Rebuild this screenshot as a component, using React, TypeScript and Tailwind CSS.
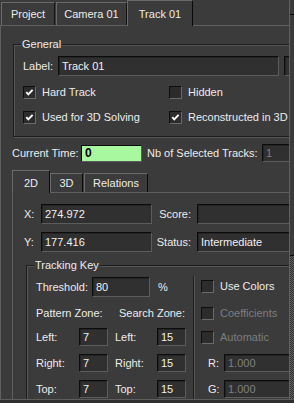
import React from "react";

const BG = "bg-[#3b3b3b]";

function Field({ cls, text, disabled }: { cls: string; text?: string; disabled?: boolean }) {
  return (
    <div
      className={`${cls} shrink-0 flex items-center pl-[3px] bg-[#303030] border border-t-[#0c0c0c] border-l-[#0c0c0c] border-b-[#5c5c5c] border-r-[#5c5c5c] shadow-[inset_1px_1px_0_#242424] overflow-hidden whitespace-nowrap ${disabled ? "text-[#7f7f7f]" : "text-[#f0f0f0]"}`}
    >
      {text}
    </div>
  );
}

function Check({ checked, disabled, label, cls }: { checked?: boolean; disabled?: boolean; label: string; cls?: string }) {
  return (
    <div className={`flex items-center h-[13px] ${cls ?? ""}`}>
      <span className="w-[13px] h-[13px] shrink-0 flex items-center justify-center bg-[#2c2c2c] border border-t-[#0e0e0e] border-l-[#0e0e0e] border-b-[#6a6a6a] border-r-[#6a6a6a]">
        {checked && (
          <svg width="11" height="11" viewBox="0 0 11 11">
            <path d="M2.3 5.2 L4.3 7.4 L8.6 2.8" stroke="#ffffff" strokeWidth="1.9" fill="none" />
          </svg>
        )}
      </span>
      <span className={`ml-[6px] whitespace-nowrap ${disabled ? "text-[#7d7d7d]" : ""}`}>{label}</span>
    </div>
  );
}

export default function App() {
  return (
    <div
      className={`w-[294px] h-[403px] relative overflow-hidden bg-[#2f2f2f] text-[11px] leading-[13px] text-[#ececec]`}
      style={{ fontFamily: '"Liberation Sans", Arial, sans-serif' }}
    >
      {/* main tabs */}
      <div className={`flex items-end h-[25px] pl-[1px] ${BG}`}>
        <div className="w-[54px] h-[23px] flex items-center justify-center border-t border-l border-r border-t-[#6a6a6a] border-l-[#6a6a6a] border-r-[#151515]">
          Project
        </div>
        <div className="ml-[1px] w-[71px] h-[23px] flex items-center justify-center border-t border-l border-r border-t-[#6a6a6a] border-l-[#6a6a6a] border-r-[#151515]">
          Camera 01
        </div>
        <div className={`relative z-10 w-[66px] h-[26px] -mb-[1px] flex items-start justify-center pt-[7px] border-t border-l border-r border-t-[#6a6a6a] border-l-[#6a6a6a] border-r-[#0a0a0a] ${BG}`}>
          Track 01
        </div>
      </div>

      {/* main panel */}
      <div className={`h-[375px] overflow-hidden border-t border-l border-b border-t-[#606060] border-l-[#606060] border-b-[#5e5e5e] ${BG}`}>
        {/* General group */}
        <div className="relative mt-[18px] ml-[12px] w-[300px] h-[93px] border border-[#1e1e1e] shadow-[inset_1px_1px_0_#555555,1px_1px_0_#555555] pt-[11px] pl-[9px]">
          <span className={`absolute -top-[7px] left-[7px] px-[1px] ${BG}`}>General</span>
          <div className="flex items-center h-[20px]">
            <span className="w-[35px] shrink-0">Label:</span>
            <Field cls="w-[221px] h-[20px]" text="Track 01" />
            <Field cls="ml-[5px] w-[40px] h-[20px]" />
          </div>
          <div className="flex mt-[10px]">
            <Check checked label="Hard Track" cls="w-[146px]" />
            <Check label="Hidden" />
          </div>
          <div className="flex mt-[12px]">
            <Check checked label="Used for 3D Solving" cls="w-[146px]" />
            <Check checked label="Reconstructed in 3D" />
          </div>
        </div>

        {/* current time */}
        <div className="flex items-center h-[18px] mt-[7px] ml-[11px]">
          <span className="w-[69px] shrink-0">Current Time:</span>
          <div className="w-[61px] h-[17px] shrink-0 flex items-center pl-[3px] bg-[#a8f8a0] border border-t-[#0c0c0c] border-l-[#0c0c0c] border-b-[#5c5c5c] border-r-[#5c5c5c] text-black font-bold text-[12px]">
            0
          </div>
          <span className="ml-[5px] w-[115px] shrink-0 whitespace-nowrap">Nb of Selected Tracks:</span>
          <Field cls="w-[40px] h-[18px]" text="1" disabled />
        </div>

        {/* sub tabs */}
        <div className="flex items-end h-[22px] mt-[8px] ml-[11px]">
          <div className={`relative z-10 w-[38px] h-[23px] -mb-[1px] flex items-start justify-center pt-[6px] border-t border-l border-r border-t-[#6a6a6a] border-l-[#6a6a6a] border-r-[#0a0a0a] ${BG}`}>
            2D
          </div>
          <div className="w-[33px] h-[19px] flex items-center justify-center border-t border-l border-r border-t-[#6a6a6a] border-l-[#6a6a6a] border-r-[#0a0a0a]">
            3D
          </div>
          <div className="ml-[1px] w-[64px] h-[19px] flex items-center justify-center border-t border-l border-r border-t-[#6a6a6a] border-l-[#6a6a6a] border-r-[#0a0a0a]">
            Relations
          </div>
        </div>

        {/* sub panel */}
        <div className="ml-[11px] w-[300px] h-[220px] border-t border-l border-t-[#606060] border-l-[#606060] pl-[11px]">
          <div className="flex items-center h-[20px] mt-[11px]">
            <span className="w-[17px] shrink-0">X:</span>
            <Field cls="w-[111px] h-[20px]" text="274.972" />
            <span className="w-[45px] shrink-0 text-right pr-[6px]">Score:</span>
            <Field cls="w-[100px] h-[20px]" />
          </div>
          <div className="flex items-center h-[20px] mt-[8px]">
            <span className="w-[17px] shrink-0">Y:</span>
            <Field cls="w-[111px] h-[20px]" text="177.416" />
            <span className="w-[45px] shrink-0 text-right pr-[6px]">Status:</span>
            <Field cls="w-[100px] h-[20px]" text="Intermediate" />
          </div>

          {/* Tracking Key */}
          <div className="relative mt-[13px] ml-[2px] w-[300px] h-[200px] border border-[#1e1e1e] shadow-[inset_1px_1px_0_#555555] flex">
            <span className={`absolute -top-[7px] left-[7px] px-[1px] ${BG}`}>Tracking Key</span>
            <div className="w-[166px] shrink-0 pt-[11px] pl-[9px]">
              <div className="flex items-center h-[20px]">
                <span className="w-[56px] shrink-0">Threshold:</span>
                <Field cls="w-[58px] h-[20px]" text="80" />
                <span className="ml-[8px]">%</span>
              </div>
              <div className="flex items-center h-[14px] mt-[9px]">
                <span className="w-[83px] shrink-0">Pattern Zone:</span>
                <span>Search Zone:</span>
              </div>
              {[
                ["Left:", "7", "15"],
                ["Right:", "7", "15"],
                ["Top:", "7", "15"],
              ].map(([l, a, b], i) => (
                <div key={l} className={`flex items-center h-[18px] ${i === 0 ? "mt-[8px]" : "mt-[8px]"}`}>
                  <span className="w-[43px] shrink-0">{l}</span>
                  <Field cls="w-[29px] h-[18px]" text={a} />
                  <span className="ml-[7px] w-[42px] shrink-0">{l}</span>
                  <Field cls="w-[29px] h-[18px]" text={b} />
                </div>
              ))}
            </div>
            <div className="mt-[10px] h-[200px] border-l border-l-[#1e1e1e] shadow-[inset_1px_0_0_#555555] pt-[4px] pl-[7px] flex-1">
              <Check label="Use Colors" />
              <Check label="Coefficients" disabled cls="mt-[14px]" />
              <Check label="Automatic" disabled cls="mt-[11px]" />
              <div className="flex items-center h-[18px] mt-[10px] ml-[7px]">
                <span className="w-[16px] shrink-0">R:</span>
                <Field cls="w-[70px] h-[18px]" text="1.000" disabled />
              </div>
              <div className="flex items-center h-[18px] mt-[8px] ml-[7px]">
                <span className="w-[16px] shrink-0">G:</span>
                <Field cls="w-[70px] h-[18px]" text="1.000" disabled />
              </div>
            </div>
          </div>
        </div>
      </div>

      {/* scrollbar strip on the right */}
      <div className="absolute top-0 right-0 w-[5px] h-[399px] border-l border-l-[#606060] bg-[#3b3b3b] flex flex-col">
        <div className="h-[14px]" />
        <div className="h-[242px] border-t border-b border-t-[#0a0a0a] border-b-[#0a0a0a]" />
        <div className="flex-1 bg-[repeating-conic-gradient(#5c5c5c_0%_25%,#343434_0%_50%)] bg-[length:2px_2px]" />
      </div>
    </div>
  );
}
